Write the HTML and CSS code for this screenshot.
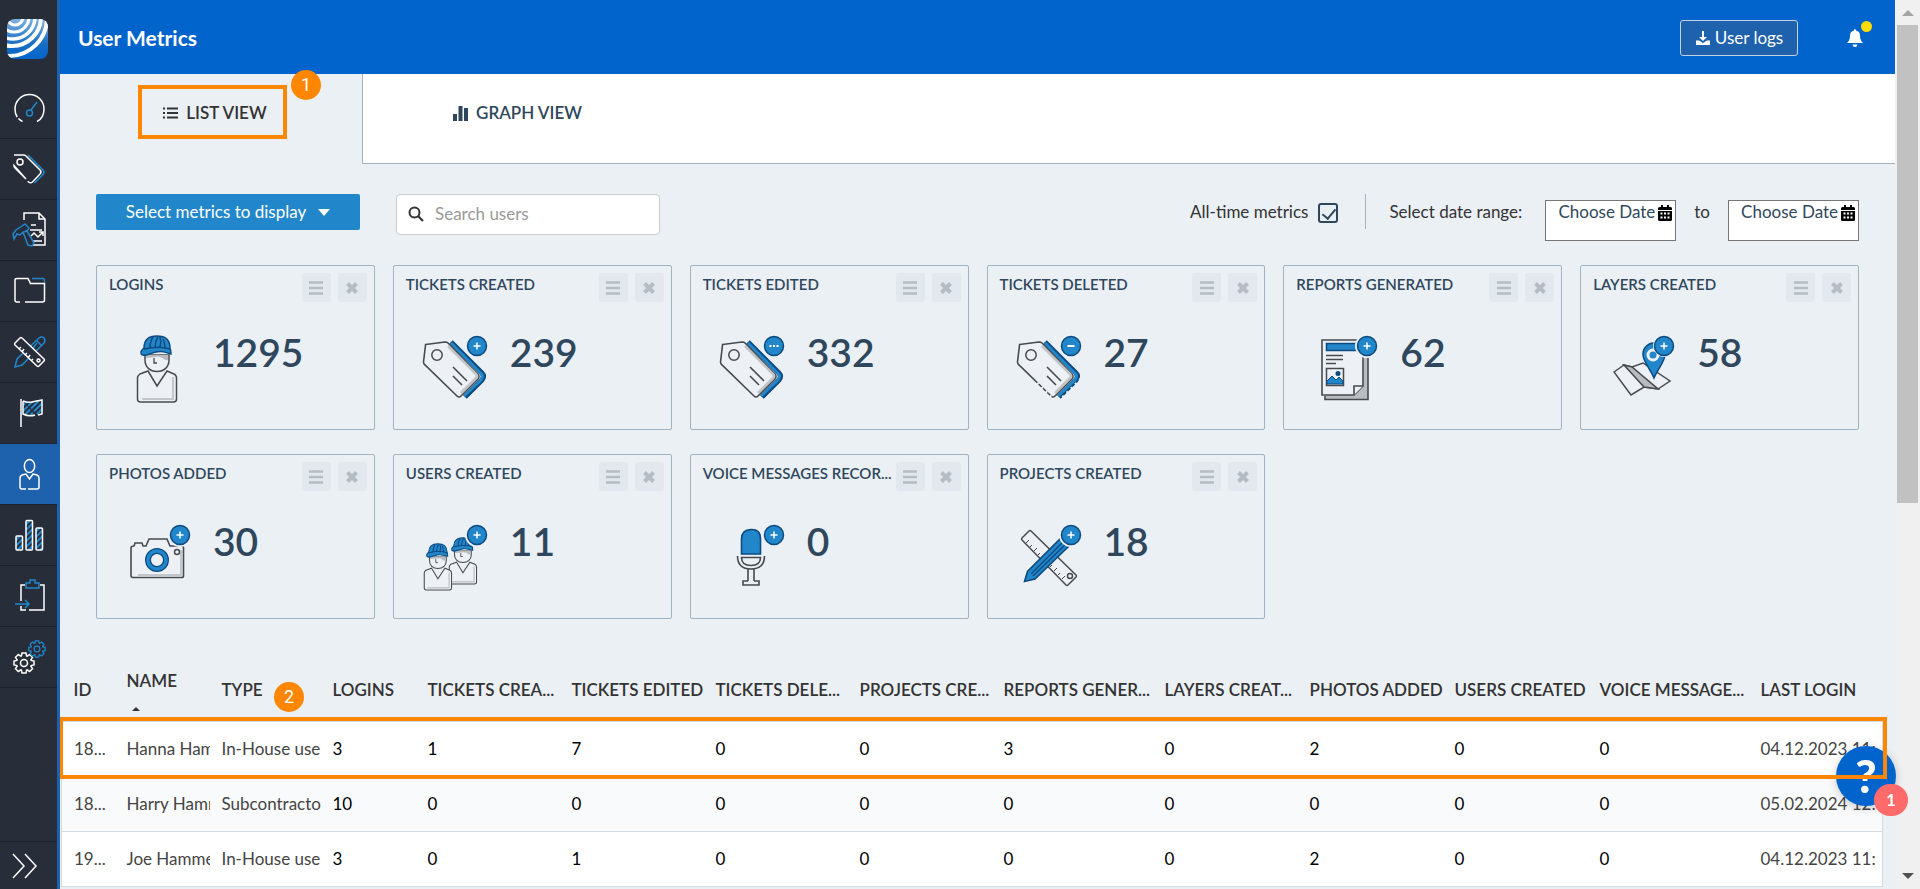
FILE: index.html
```html
<!DOCTYPE html>
<html lang="en">

<head>
    <title>User Metrics</title>
    <meta charset="utf-8">
    <meta name="viewport" content="width=device-width, initial-scale=1.0">
    <link rel="stylesheet" href="styles.css">
</head>

<body>

    <!-- shared shapes -->
    <svg class="defs" aria-hidden="true">
        <defs>
            <pattern id="hatch" width="4" height="4" patternUnits="userSpaceOnUse" patternTransform="rotate(45)">
                <rect width="2" height="4" fill="#2187ca" />
            </pattern>
            <linearGradient id="logo-bg" x1="0" y1="0" x2="0" y2="1">
                <stop offset="0" stop-color="#7fb2e0" />
                <stop offset="0.6" stop-color="#1a6fc4" />
                <stop offset="1" stop-color="#0064cc" />
            </linearGradient>
            <clipPath id="logo-clip">
                <rect width="41" height="40" rx="8" />
            </clipPath>
            <symbol id="gear" viewBox="-11 -11 22 22">
                <path d="M-2.6-7.1L-2-10 2-10 2.6-7.1 3.2-6.9 5.7-8.5 8.5-5.7 6.9-3.2 7.1-2.6 10-2 10 2 7.1 2.6 6.9 3.2 8.5 5.7 5.7 8.5 3.2 6.9 2.6 7.1 2 10-2 10-2.6 7.1-3.2 6.9-5.7 8.5-8.5 5.7-6.9 3.2-7.1 2.6-10 2-10-2-7.1-2.6-6.9-3.2-8.5-5.7-5.7-8.5-3.2-6.9Z" />
                <circle r="3.5" />
            </symbol>
            <symbol id="badge" viewBox="0 0 22 22">
                <circle cx="11" cy="11" r="9.5" fill="#2187ca" stroke="#0d4a80" stroke-width="1.5" />
            </symbol>
            <g id="plus">
                <use href="#badge" x="49" y="0" width="22" height="22" />
                <path d="M60 7.5v7M56.5 11h7" stroke="#fff" stroke-width="1.5" />
            </g>
            <g id="worker">
                <path d="M25 20v5c0 7 5 11.500 12 11.500s12-4.500 12-11.500v-5z" fill="#edf1f5" stroke="#474b4f" stroke-width="1.5" />
                <path d="M26 20h22v5c-3 1-4-2-8-3s-9 1-14 1z" fill="#b9bdc1" />
                <path d="M34 23v5h3" fill="none" stroke="#474b4f" stroke-width="1.3" />
                <path d="M21 17c0-2 2-3 3-4C24 5 29 1 37 1s13 4 13 12c1 2 1 4 1 6-6-2-9-3-15-2-5 1-9 4-13 3-2 0-2-1-2-3z" fill="#2187ca" stroke="#0d4a80" stroke-width="1.5" />
                <path d="M24 14c8-2 17-3 26 0M30 13c0-5 1-8 3-11M35 12c0-4 1-7 3-10M40 12c1-4 1-7 0-10M45 13c0-4-1-7-2-9" fill="none" stroke="#0d4a80" stroke-width="1.5" />
                <path d="M28 36l9 15 10-15 7 3c2 1 2.500 2 2.500 4v21c0 2-1 3-3 3h-33c-2 0-3-1-3-3V43c0-2 1-3 2.500-4z" fill="#edf1f5" stroke="#474b4f" stroke-width="1.5" />
                <path d="M53 42v22H22" fill="none" stroke="#c3c7cb" stroke-width="2" />
            </g>
            <g id="tag">
                <path d="M34 7L65 38Q68 41 65 45L48 62" fill="none" stroke="#0d4a80" stroke-width="5" />
                <path d="M34 8L64 38.500Q67 41 64 45L47 61" fill="none" stroke="#2187ca" stroke-width="3" />
                <path d="M8.600 9.500L28 7Q30 7 31 8L61 39Q63 41.500 61 44L44 61Q42 63 40 61L8 30Q6.500 29 6.500 27Z" fill="#edf1f5" stroke="#474b4f" stroke-width="1.600" />
                <path d="M31 11l28 28q2 2 0 4L44 58" fill="none" stroke="#bfc4c9" stroke-width="2.500" />
                <circle cx="20" cy="20" r="5.200" fill="none" stroke="#474b4f" stroke-width="1.500" />
                <path d="M36 32l14 14M36 41l9 9" stroke="#474b4f" stroke-width="1.600" />
            </g>
            <symbol id="bars" viewBox="0 0 16 16">
                <path d="M1 2.500h14M1 8h14M1 13.500h14" stroke="currentColor" stroke-width="2.500" />
            </symbol>
            <symbol id="cross" viewBox="0 0 16 16">
                <path d="M3.500 3.500l9 9M12.500 3.500l-9 9" stroke="currentColor" stroke-width="4" />
            </symbol>
            <symbol id="calendar" viewBox="0 0 14 16">
                <path d="M3 0h2v3H3zM9 0h2v3H9zM1.500 2h11Q14 2 14 3.500V5H0V3.500Q0 2 1.500 2zM0 6h14v8.500Q14 16 12.500 16h-11Q0 16 0 14.500z" />
                <path d="M2.500 8.500h2M6 8.500h2M9.500 8.500h2M2.500 12.500h2M6 12.500h2M9.500 12.500h2" stroke="#fff" stroke-width="2" />
            </symbol>
        </defs>
    </svg>

    <div class="app">

        <nav class="sidebar">
            <a class="logo" href="#" aria-label="Home">
                <svg width="41" height="40" viewBox="0 0 41 40">
                    <g clip-path="url(#logo-clip)">
                        <rect width="41" height="40" fill="url(#logo-bg)" />
                        <g fill="none" stroke="#fff">
                            <circle cx="8" cy="-2" r="8" stroke-width="3" />
                            <circle cx="7" cy="-2" r="15" stroke-width="3" />
                            <circle cx="6" cy="-2" r="22" stroke-width="3.500" />
                            <circle cx="5" cy="-2" r="29" stroke-width="4" />
                            <circle cx="2" cy="-1" r="38" stroke-width="4" />
                        </g>
                    </g>
                </svg>
            </a>
            <a class="item" href="#" aria-label="Dashboard">
                <svg viewBox="0 0 32 32">
                    <path d="M9.500 29.500C4 27 2 22 2 17a14.500 14.500 0 0 1 29 0c0 5-2 10-7 12.500" stroke-dasharray="5 2 100" />
                    <g class="blue">
                        <circle cx="16.500" cy="21" r="3" />
                        <path d="M18 18l6-8" />
                    </g>
                </svg>
            </a>
            <a class="item" href="#" aria-label="Tickets">
                <svg viewBox="0 0 32 32">
                    <path class="blue" d="M15 2l15 15q2 2 0 4.500L21.500 30" />
                    <path d="M1 2h9.500q1.500 0 2.500 1l14 14q2 2 0 4l-7.500 8q-2 1.500-4 0L15 28M13 26L2 15q-1-1-1-2.500z" />
                    <circle cx="7" cy="9" r="3" />
                </svg>
            </a>
            <a class="item" href="#" aria-label="Reports">
                <svg viewBox="0 0 32 32">
                    <path d="M11 6V-1h15l6 6v26H20M26-1v6h6M18 11h5M17 16h12M18 22l3-3 4 4 5-5M26 18h4v4M20 27h9" />
                    <path class="blue" d="M3 16l9-6 4 4-2 3 7 12-2 3-4-1-5-13-3 3-3-1-3 5-1-5zM11 18l4-2" />
                </svg>
            </a>
            <a class="item" href="#" aria-label="Files">
                <svg viewBox="0 0 32 32">
                    <path class="blue" d="M19 3.500h11q1.500 0 1.500 2v2" />
                    <path d="M7 27H4q-2 0-2-2V5q0-1.500 2-1.500h11q1.500 3 2.500 5H31.500V25q0 2-2 2H12" />
                </svg>
            </a>
            <a class="item" href="#" aria-label="Tools">
                <svg viewBox="0 0 32 32">
                    <path class="blue" d="M2 31l2-8L26 2q3-2 5 0t0 5L9 29zM24 5l4 4M20 12l4-5" />
                    <path class="cover" d="M2 7l5-5q1-1 2 0l22 21q1 1 0 2l-5 5q-1 1-2 0L2 9q-1-1 0-2z" />
                    <path d="M6 13l2-2M9 16l2-3M12 19l2-2M15 22l2-3M18 25l2-2" />
                    <circle cx="25.500" cy="24.500" r="1.500" />
                </svg>
            </a>
            <a class="item" href="#" aria-label="Milestones">
                <svg viewBox="0 0 32 32">
                    <path d="M8 2v28M10 4q5 2 9 1t10-2v14l-4 1M22 18q-6 2-12-1V4" fill="url(#hatch)" />
                </svg>
            </a>
            <a class="item active" href="#" aria-label="Users">
                <svg viewBox="0 0 32 32">
                    <ellipse cx="16.500" cy="8" rx="5.200" ry="6.500" />
                    <path d="M13 31H9q-2 0-2-2v-9q0-2 2-3l4-1 3.500 5 3.500-5 4 1q2 1 2 3v9q0 2-2 2h-9" />
                </svg>
            </a>
            <a class="item" href="#" aria-label="Statistics">
                <svg viewBox="0 0 32 32">
                    <g fill="url(#hatch)">
                        <rect x="3" y="17" width="6.500" height="14" rx="1" />
                        <rect x="13" y="1.500" width="6.500" height="29.500" rx="1" />
                        <rect x="23" y="9" width="6.500" height="22" rx="1" />
                    </g>
                </svg>
            </a>
            <a class="item" href="#" aria-label="Imports">
                <svg viewBox="0 0 32 32">
                    <path d="M12 5H8v16M8 26v4h5M16 30h15V5h-4" />
                    <path class="blue" d="M13 3h4V0h5v3h4v5H13zM2 24h14M12 20l4 4-4 4" />
                </svg>
            </a>
            <a class="item" href="#" aria-label="Settings">
                <svg viewBox="0 0 32 32">
                    <use href="#gear" x="0" y="11" width="22" height="22" />
                    <use class="blue" href="#gear" x="15" y="-1" width="18" height="18" />
                </svg>
            </a>
            <a class="item expand" href="#" aria-label="Expand menu">
                <svg viewBox="0 0 32 32">
                    <path d="M0 4l11 12L0 28M12 4l11 12-11 12" />
                </svg>
            </a>
        </nav>

        <main>

            <header>
                <h1>User Metrics</h1>
                <button class="logs" type="button">
                    <svg width="16" height="16" viewBox="0 0 16 16">
                        <path d="M7 1h2v6h3l-4 4-4-4h3zM1 10.500h3l4 2.500 4-2.500h3V15H1z" fill="#fff" />
                    </svg>
                    User logs
                </button>
                <button class="bell" type="button" aria-label="Notifications">
                    <svg width="16" height="18" viewBox="0 0 16 18">
                        <path d="M8 0q1 0 1 1.500 4 1 4 5 0 5 3 7.500H0q3-2.500 3-7.500 0-4 4-5Q7 0 8 0zM5.500 15.500h5Q10 18 8 18t-2.500-2.500z" fill="#fff" />
                    </svg>
                    <span class="dot"></span>
                </button>
            </header>

            <div class="tabs">
                <button class="tab selected" type="button">
                    <svg width="15" height="12" viewBox="0 0 15 12">
                        <path d="M0 1.500h2M0 6h2M0 10.500h2M4 1.500h11M4 6h11M4 10.500h11" stroke="currentColor" stroke-width="1.800" />
                    </svg>
                    LIST VIEW
                    <span class="highlight"></span>
                    <span class="step step-one">1</span>
                </button>
                <button class="tab" type="button">
                    <svg width="15" height="15" viewBox="0 0 15 15">
                        <path d="M2 15V8M7.500 15V0M13 15V2" stroke="currentColor" stroke-width="4" />
                    </svg>
                    GRAPH VIEW
                </button>
            </div>

            <section class="toolbar">
                <button class="metrics" type="button">Select metrics to display <span class="caret"></span></button>
                <div class="search">
                    <svg width="16" height="16" viewBox="0 0 16 16">
                        <circle cx="6.500" cy="6.500" r="5" fill="none" stroke="#333" stroke-width="2" />
                        <path d="M10 10l5 5" stroke="#333" stroke-width="2.200" />
                    </svg>
                    <input type="text" placeholder="Search users" aria-label="Search users">
                </div>
                <div class="range">
                    <label class="alltime" for="alltime">All-time metrics</label>
                    <input id="alltime" type="checkbox" checked>
                    <span class="divider"></span>
                    <span class="between">Select date range:</span>
                    <button class="date" type="button">Choose Date <svg width="14" height="16"><use href="#calendar" /></svg></button>
                    <span class="to">to</span>
                    <button class="date" type="button">Choose Date <svg width="14" height="16"><use href="#calendar" /></svg></button>
                </div>
            </section>

            <section class="cards">
                <article class="card">
                    <div class="card-head">
                        <h2>LOGINS</h2>
                        <button type="button" aria-label="Move"><svg><use href="#bars" /></svg></button>
                        <button type="button" aria-label="Remove"><svg><use href="#cross" /></svg></button>
                    </div>
                    <div class="card-body">
                        <svg class="pic" viewBox="0 0 72 72"><use href="#worker" /></svg>
                        <p>1295</p>
                    </div>
                </article>
                <article class="card">
                    <div class="card-head">
                        <h2>TICKETS CREATED</h2>
                        <button type="button" aria-label="Move"><svg><use href="#bars" /></svg></button>
                        <button type="button" aria-label="Remove"><svg><use href="#cross" /></svg></button>
                    </div>
                    <div class="card-body">
                        <svg class="pic" viewBox="0 0 72 72"><use href="#tag" /><use href="#plus" /></svg>
                        <p>239</p>
                    </div>
                </article>
                <article class="card">
                    <div class="card-head">
                        <h2>TICKETS EDITED</h2>
                        <button type="button" aria-label="Move"><svg><use href="#bars" /></svg></button>
                        <button type="button" aria-label="Remove"><svg><use href="#cross" /></svg></button>
                    </div>
                    <div class="card-body">
                        <svg class="pic" viewBox="0 0 72 72">
                            <use href="#tag" />
                            <use href="#badge" x="49" y="0" width="22" height="22" />
                            <path d="M55.500 11h2M59 11h2M62.500 11h2" stroke="#fff" stroke-width="2" />
                        </svg>
                        <p>332</p>
                    </div>
                </article>
                <article class="card">
                    <div class="card-head">
                        <h2>TICKETS DELETED</h2>
                        <button type="button" aria-label="Move"><svg><use href="#bars" /></svg></button>
                        <button type="button" aria-label="Remove"><svg><use href="#cross" /></svg></button>
                    </div>
                    <div class="card-body">
                        <svg class="pic" viewBox="0 0 72 72">
                            <use href="#tag" />
                            <path d="M70 44L51 63" stroke="#ebf0f5" stroke-width="3" stroke-dasharray="2 4" />
                            <path d="M26 48L40 62" stroke="#ebf0f5" stroke-width="3" stroke-dasharray="2 4" />
                            <use href="#badge" x="49" y="0" width="22" height="22" />
                            <path d="M56.500 11h7" stroke="#fff" stroke-width="2" />
                        </svg>
                        <p>27</p>
                    </div>
                </article>
                <article class="card">
                    <div class="card-head">
                        <h2>REPORTS GENERATED</h2>
                        <button type="button" aria-label="Move"><svg><use href="#bars" /></svg></button>
                        <button type="button" aria-label="Remove"><svg><use href="#cross" /></svg></button>
                    </div>
                    <div class="card-body">
                        <svg class="pic" viewBox="0 0 72 72">
                            <path d="M18 61v3.500h43V20" fill="#b9bdc1" stroke="#474b4f" stroke-width="1.600" />
                            <path d="M15 5h41v46l-9 9H15z" fill="#edf1f5" stroke="#474b4f" stroke-width="1.600" />
                            <path d="M56 51h-9v9" fill="#edf1f5" stroke="#474b4f" stroke-width="1.600" />
                            <rect x="19.500" y="8.500" width="33" height="7" fill="#2187ca" stroke="#0d4a80" stroke-width="1.500" />
                            <path d="M19 20.500h17M19 24.500h17M19 28.500h10" stroke="#474b4f" stroke-width="1.500" />
                            <rect x="19.500" y="33.500" width="17" height="17" fill="#edf1f5" stroke="#474b4f" stroke-width="1.500" />
                            <path d="M20 49v-3l5-5 4 4 3-3 4 4v3z" fill="#2187ca" stroke="#0d4a80" />
                            <circle cx="31" cy="38.500" r="2.500" fill="#0d4a80" />
                            <circle cx="60" cy="11" r="12" fill="#ebf0f5" />
                            <use href="#plus" />
                        </svg>
                        <p>62</p>
                    </div>
                </article>
                <article class="card">
                    <div class="card-head">
                        <h2>LAYERS CREATED</h2>
                        <button type="button" aria-label="Move"><svg><use href="#bars" /></svg></button>
                        <button type="button" aria-label="Remove"><svg><use href="#cross" /></svg></button>
                    </div>
                    <div class="card-body">
                        <svg class="pic" viewBox="0 0 72 72">
                            <path d="M10 37l10-7 8 2 11-4 27 18-12 8-14-2-13 8z" fill="#edf1f5" stroke="#474b4f" stroke-width="1.500" />
                            <path d="M20 30l8 2 26 22-14-2z" fill="#b9bdc1" stroke="#474b4f" stroke-width="1.500" />
                            <path d="M50 43C46 33 39 27 39 19a11 11 0 0 1 22 0c0 8-7 14-11 24z" fill="#2187ca" stroke="#0d4a80" stroke-width="1.500" />
                            <circle cx="60" cy="11" r="11" fill="#ebf0f5" />
                            <circle cx="49" cy="20" r="5" fill="#2187ca" stroke="#edf1f5" stroke-width="3" />
                            <use href="#plus" />
                        </svg>
                        <p>58</p>
                    </div>
                </article>
                <article class="card">
                    <div class="card-head">
                        <h2>PHOTOS ADDED</h2>
                        <button type="button" aria-label="Move"><svg><use href="#bars" /></svg></button>
                        <button type="button" aria-label="Remove"><svg><use href="#cross" /></svg></button>
                    </div>
                    <div class="card-body">
                        <svg class="pic" viewBox="0 0 72 72">
                            <path d="M14 22l1-3h7l1 3h3l3-7h18l3 7h12q1.500 0 1.500 2v28q0 1.500-2 1.500H13q-2 0-2-2V24q0-2 3-2z" fill="#edf1f5" stroke="#474b4f" stroke-width="1.600" />
                            <path d="M61 26v25H18" fill="none" stroke="#c3c7cb" stroke-width="2" />
                            <circle cx="37" cy="36" r="9" fill="#edf1f5" stroke="#0d4a80" stroke-width="6" />
                            <circle cx="37" cy="36" r="9" fill="none" stroke="#2187ca" stroke-width="3.500" />
                            <circle cx="57" cy="28" r="2.500" fill="none" stroke="#474b4f" stroke-width="1.500" />
                            <circle cx="60" cy="11" r="12" fill="#ebf0f5" />
                            <use href="#plus" />
                        </svg>
                        <p>30</p>
                    </div>
                </article>
                <article class="card">
                    <div class="card-head">
                        <h2>USERS CREATED</h2>
                        <button type="button" aria-label="Move"><svg><use href="#bars" /></svg></button>
                        <button type="button" aria-label="Remove"><svg><use href="#cross" /></svg></button>
                    </div>
                    <div class="card-body">
                        <svg class="pic" viewBox="0 0 72 72">
                            <use href="#worker" transform="translate(20 13) scale(.7)" />
                            <use href="#worker" transform="translate(-5 19) scale(.7)" />
                            <circle cx="60" cy="11" r="12" fill="#ebf0f5" />
                            <use href="#plus" />
                        </svg>
                        <p>11</p>
                    </div>
                </article>
                <article class="card">
                    <div class="card-head">
                        <h2>VOICE MESSAGES RECOR...</h2>
                        <button type="button" aria-label="Move"><svg><use href="#bars" /></svg></button>
                        <button type="button" aria-label="Remove"><svg><use href="#cross" /></svg></button>
                    </div>
                    <div class="card-body">
                        <svg class="pic" viewBox="0 0 72 72">
                            <path d="M27.500 30V15q0-9 9.500-9.500t9.500 9.500v15z" fill="#2187ca" stroke="#0d4a80" stroke-width="1.600" />
                            <g fill="none" stroke="#474b4f" stroke-width="1.600">
                                <path d="M23.500 32q0 13 13.500 13t13.500-13M27.500 33.500h19q0 8-9.500 8t-9.500-8zM34 45v12M40 45v12" />
                                <path d="M34 57h-5v4h16v-4h-5" />
                            </g>
                            <use href="#plus" />
                        </svg>
                        <p>0</p>
                    </div>
                </article>
                <article class="card">
                    <div class="card-head">
                        <h2>PROJECTS CREATED</h2>
                        <button type="button" aria-label="Move"><svg><use href="#bars" /></svg></button>
                        <button type="button" aria-label="Remove"><svg><use href="#cross" /></svg></button>
                    </div>
                    <div class="card-body">
                        <svg class="pic" viewBox="0 0 72 72">
                            <path d="M11 14l7-7q1-1 2 0l45 44q1 1 0 2l-8 8q-1 1-2 0L11 16q-1-1 0-2z" fill="#edf1f5" stroke="#474b4f" stroke-width="1.500" />
                            <path d="M15 19l3-3M19 23l2-2M23 27l3-3M27 31l2-2M31 35l3-3M39 43l2-2M43 47l3-3M47 51l2-2M51 55l3-3" stroke="#474b4f" />
                            <circle cx="59" cy="52" r="2.500" fill="none" stroke="#474b4f" stroke-width="1.500" />
                            <path d="M13.500 57.500l3-10L50 14l8 8-34 33z" fill="#2187ca" stroke="#0d4a80" stroke-width="1.600" />
                            <path d="M20 50l33-33M22 52l33-32" stroke="#0d4a80" stroke-width="1.400" />
                            <circle cx="60" cy="11" r="12" fill="#ebf0f5" />
                            <use href="#plus" />
                        </svg>
                        <p>18</p>
                    </div>
                </article>
            </section>

            <section class="users">
                <table>
                    <colgroup>
                        <col class="c-id">
                        <col class="c-small">
                        <col class="c-type">
                        <col class="c-small">
                        <col span="4" class="c-count">
                        <col class="c-wide">
                        <col span="3" class="c-mid">
                        <col class="c-wide">
                        <col>
                    </colgroup>
                    <thead>
                        <tr>
                            <th>ID</th>
                            <th class="sorted">NAME<span class="sort"></span></th>
                            <th>TYPE</th>
                            <th>LOGINS</th>
                            <th>TICKETS CREA...</th>
                            <th>TICKETS EDITED</th>
                            <th>TICKETS DELE...</th>
                            <th>PROJECTS CRE...</th>
                            <th>REPORTS GENER...</th>
                            <th>LAYERS CREAT...</th>
                            <th>PHOTOS ADDED</th>
                            <th>USERS CREATED</th>
                            <th>VOICE MESSAGE...</th>
                            <th>LAST LOGIN</th>
                        </tr>
                    </thead>
                    <tbody>
                        <tr>
                            <td class="text">18...</td>
                            <td class="text">Hanna Hammer</td>
                            <td class="text">In-House user</td>
                            <td>3</td>
                            <td>1</td>
                            <td>7</td>
                            <td>0</td>
                            <td>0</td>
                            <td>3</td>
                            <td>0</td>
                            <td>2</td>
                            <td>0</td>
                            <td>0</td>
                            <td class="text">04.12.2023 11:</td>
                        </tr>
                        <tr>
                            <td class="text">18...</td>
                            <td class="text">Harry Hammer</td>
                            <td class="text">Subcontractor</td>
                            <td>10</td>
                            <td>0</td>
                            <td>0</td>
                            <td>0</td>
                            <td>0</td>
                            <td>0</td>
                            <td>0</td>
                            <td>0</td>
                            <td>0</td>
                            <td>0</td>
                            <td class="text">05.02.2024 12:</td>
                        </tr>
                        <tr>
                            <td class="text">19...</td>
                            <td class="text">Joe Hammer</td>
                            <td class="text">In-House user</td>
                            <td>3</td>
                            <td>0</td>
                            <td>1</td>
                            <td>0</td>
                            <td>0</td>
                            <td>0</td>
                            <td>0</td>
                            <td>2</td>
                            <td>0</td>
                            <td>0</td>
                            <td class="text">04.12.2023 11:</td>
                        </tr>
                    </tbody>
                </table>
                <span class="step step-two">2</span>
                <span class="row-highlight"></span>
            </section>

        </main>

        <div class="scrollbar">
            <span class="arrow up"></span>
            <span class="thumb"></span>
            <span class="arrow down"></span>
        </div>

    </div>

    <button class="help" type="button">?<span class="unread">1</span></button>

</body>

</html>
```
FILE: styles.css
```css
* {
    box-sizing: border-box;
}

body {
    margin: 0;
    font-family: Lato, sans-serif;
    font-size: 17px;
    line-height: 20px;
    color: #333;
    background: #ebf0f5;
}

button,
input {
    font-family: inherit;
    font-size: inherit;
    line-height: inherit;
    color: inherit;
}

button {
    border: 0;
    padding: 0;
    background: none;
    cursor: pointer;
}

svg {
    display: block;
    flex: none;
}

.defs {
    position: absolute;
    width: 0;
    height: 0;
}

.app {
    display: flex;
    height: 100vh;
    overflow: hidden;
}

/* sidebar */

.sidebar {
    display: flex;
    flex-direction: column;
    flex: none;
    width: 60px;
    background: #282d3a;
    border-right: 3px solid #1e62ae;
}

.logo {
    flex: none;
    height: 78px;
    padding: 19px 0 0 7px;
}

.item {
    display: flex;
    flex: none;
    align-items: center;
    justify-content: center;
    height: 61px;
    border-bottom: 1px solid #1d212b;
}

.item svg {
    width: 32px;
    height: 32px;
    overflow: visible;
    fill: none;
    stroke: #fff;
    stroke-width: 1.5;
}

.item .blue {
    stroke: #2187ca;
}

.item .cover {
    fill: #282d3a;
}

.item.active {
    background: #1e62ae;
}

.item.expand {
    height: 48px;
    margin-top: auto;
    border-top: 1px solid #1d212b;
    border-bottom: 0;
}

main {
    flex: 1;
    min-width: 0;
    overflow: hidden;
}

/* top bar */

header {
    display: flex;
    align-items: center;
    height: 74px;
    padding: 2px 28px 0 18px;
    background: #0064cc;
    color: #fff;
}

h1 {
    margin: 0 auto 0 0;
    font-size: 21px;
    font-weight: 700;
    line-height: 28px;
}

.logs {
    display: flex;
    align-items: center;
    justify-content: center;
    gap: 4px;
    width: 118px;
    height: 36px;
    margin-right: 49px;
    border: 1px solid #c3d3e6;
    border-radius: 3px;
    background: #1e62ae;
}

.bell {
    position: relative;
    width: 20px;
    height: 18px;
}

.dot {
    position: absolute;
    top: -8px;
    right: -5px;
    width: 11px;
    height: 11px;
    border-radius: 50%;
    background: #ffdc00;
}

/* tabs */

.tabs {
    display: flex;
    height: 90px;
    background: #fff;
    border-bottom: 1px solid #9fb3c3;
}

.tab {
    position: relative;
    display: flex;
    align-items: center;
    justify-content: center;
    gap: 8px;
    width: 301px;
    height: 90px;
    padding: 0 0 12px 8px;
    font-weight: 600;
    color: #2f475c;
}

.tab.selected {
    width: 303px;
    border-right: 1px solid #9fb3c3;
    background: #ebf0f5;
    color: #333;
}

.highlight {
    position: absolute;
    top: 11px;
    left: 78px;
    width: 149px;
    height: 54px;
    border: 4px solid #ff8600;
}

.step {
    position: absolute;
    z-index: 2;
    width: 30px;
    height: 30px;
    border-radius: 50%;
    background: #ff8600;
    color: #fff;
    font-family: Roboto, sans-serif;
    font-size: 18px;
    font-weight: 400;
    line-height: 30px;
    text-align: center;
}

.step-one {
    top: -4px;
    left: 231px;
}

/* toolbar */

.toolbar {
    display: flex;
    align-items: flex-start;
    gap: 36px;
    padding: 30px 36px;
}

.metrics {
    width: 264px;
    height: 36px;
    border-radius: 2px;
    background: #2187ca;
    color: #fff;
}

.caret {
    display: inline-block;
    margin: 0 0 2px 8px;
    border: 6px solid transparent;
    border-top: 7px solid #fff;
    border-bottom: 0;
}

.search {
    display: flex;
    align-items: center;
    gap: 11px;
    width: 264px;
    height: 41px;
    padding: 0 11px 1px;
    border: 1px solid #ccc;
    border-radius: 4px;
    background: #fff;
}

.search input {
    flex: 1;
    min-width: 0;
    border: 0;
    padding: 0;
    background: none;
    outline: 0;
}

.search input::placeholder {
    color: #999;
}

.range {
    display: flex;
    align-items: flex-start;
    height: 41px;
    margin-left: auto;
    line-height: 36px;
}

.range input {
    appearance: none;
    position: relative;
    width: 20px;
    height: 20px;
    margin: 9px 27px 0 10px;
    border: 2px solid #2f475c;
    border-radius: 3px;
}

.range input::after {
    content: "";
    position: absolute;
    top: 1px;
    left: 5px;
    width: 6px;
    height: 11px;
    border: solid #2f475c;
    border-width: 0 2px 2px 0;
    transform: rotate(40deg);
}

.divider {
    width: 1px;
    height: 35px;
    margin-right: 23px;
    background: #9fb3c3;
}

.between {
    margin-right: 23px;
}

.to {
    margin: 0 18px;
}

.date {
    display: flex;
    align-items: flex-start;
    justify-content: flex-end;
    gap: 3px;
    width: 131px;
    height: 41px;
    margin-top: 6px;
    padding: 1px 3px;
    border: 1px solid #767676;
    background: #fff;
    color: #2f475c;
    line-height: 20px;
}

.date svg {
    margin-top: 3px;
    fill: #000;
}

/* metric cards */

.cards {
    display: grid;
    grid-template-columns: repeat(6, minmax(0, 1fr));
    gap: 24px 18px;
    padding: 0 36px;
}

.card {
    height: 165px;
    border: 1px solid #9fb3c3;
    border-radius: 2px;
    color: #2f475c;
}

.card-head {
    display: flex;
    gap: 7px;
    padding: 7px 7px 0 12px;
}

.card-head h2 {
    flex: 1;
    min-width: 0;
    margin: 1px 0 0;
    font-size: 15px;
    font-weight: 600;
    line-height: 20px;
    white-space: nowrap;
}

.card-head button {
    display: flex;
    align-items: center;
    justify-content: center;
    width: 29px;
    height: 29px;
    border-radius: 3px;
    background: #e2e8ee;
    color: #b5bcc2;
}

.card-head button svg {
    width: 16px;
    height: 16px;
}

.card-body {
    display: flex;
    gap: 21px;
    padding: 33px 0 0 23px;
}

.pic {
    width: 72px;
    height: 72px;
}

.card-body p {
    margin: 0;
    font-size: 39px;
    font-weight: 600;
    line-height: 34px;
}

/* user table */

.users {
    position: relative;
    margin: 39px 12px 0 1px;
}

table {
    width: 100%;
    table-layout: fixed;
    border-collapse: collapse;
}

.c-id {
    width: 53px;
}

.c-small {
    width: 95px;
}

.c-type {
    width: 111px;
}

.c-count {
    width: 144px;
}

.c-mid {
    width: 145px;
}

.c-wide {
    width: 161px;
}

th,
td {
    overflow: hidden;
    padding: 0 0 0 12px;
    text-align: left;
    white-space: nowrap;
}

th {
    height: 63px;
    padding-top: 2px;
    font-weight: 600;
}

.sorted {
    padding-top: 3px;
}

.sort {
    display: block;
    width: 0;
    margin: 16px 0 0 5px;
    border: 4px solid transparent;
    border-top: 0;
    border-bottom: 4px solid #333;
}

tbody tr {
    height: 55px;
    border: 1px solid #cfdce6;
    background: #fff;
}

tbody tr:nth-child(even) {
    background: #f9fafc;
}

td {
    color: #000;
}

td.text {
    color: #444;
}

.step-two {
    top: 24px;
    left: 213px;
}

.row-highlight {
    position: absolute;
    z-index: 4;
    top: 59px;
    left: -2px;
    right: -4px;
    height: 62px;
    border: 4px solid #ff8600;
}

/* scrollbar */

.scrollbar {
    display: flex;
    flex-direction: column;
    align-items: center;
    flex: none;
    width: 25px;
    padding: 10px 0;
    background: #f0f0f0;
}

.arrow {
    border: 6px solid transparent;
}

.up {
    border-top: 0;
    border-bottom-color: #a3a3a3;
}

.down {
    margin-top: auto;
    border-bottom: 0;
    border-top-color: #505050;
}

.thumb {
    width: 21px;
    height: 55%;
    margin-top: 9px;
    background: #c1c1c1;
}

/* help bubble, the row outline runs over it */

.help {
    position: fixed;
    z-index: 3;
    right: 24px;
    bottom: 83px;
    width: 60px;
    height: 60px;
    border-radius: 50%;
    background: #0064cc;
    box-shadow: 0 2px 10px rgba(0, 0, 0, 0.2);
    color: #fff;
    font-size: 46px;
    font-weight: 900;
    line-height: 60px;
}

.unread {
    position: absolute;
    right: -12px;
    bottom: -10px;
    width: 34px;
    height: 32px;
    border-radius: 16px;
    background: #ff6a6a;
    font-size: 17px;
    font-weight: 700;
    line-height: 31px;
}
```
